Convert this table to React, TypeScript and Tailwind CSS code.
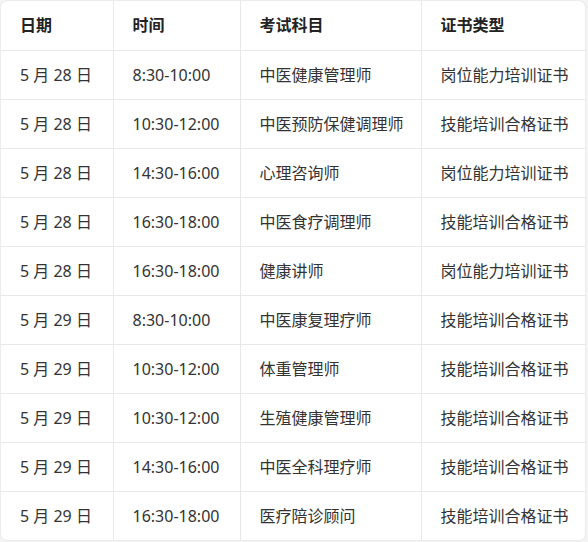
const rows = [
  ["5 月 28 日", "8:30-10:00", "中医健康管理师", "岗位能力培训证书"],
  ["5 月 28 日", "10:30-12:00", "中医预防保健调理师", "技能培训合格证书"],
  ["5 月 28 日", "14:30-16:00", "心理咨询师", "岗位能力培训证书"],
  ["5 月 28 日", "16:30-18:00", "中医食疗调理师", "技能培训合格证书"],
  ["5 月 28 日", "16:30-18:00", "健康讲师", "岗位能力培训证书"],
  ["5 月 29 日", "8:30-10:00", "中医康复理疗师", "技能培训合格证书"],
  ["5 月 29 日", "10:30-12:00", "体重管理师", "技能培训合格证书"],
  ["5 月 29 日", "10:30-12:00", "生殖健康管理师", "技能培训合格证书"],
  ["5 月 29 日", "14:30-16:00", "中医全科理疗师", "技能培训合格证书"],
  ["5 月 29 日", "16:30-18:00", "医疗陪诊顾问", "技能培训合格证书"],
];

const headers = ["日期", "时间", "考试科目", "证书类型"];
const widths = ["w-[112px]", "w-[127px]", "w-[181px]", ""];

export default function App() {
  return (
    <div
      className="w-[588px] h-[542px] bg-[#f4f4f4] pt-px pl-px"
      style={{ fontFamily: '"Noto Sans", "Noto Sans CJK SC", sans-serif' }}
    >
      <div className="w-[584px] h-[539px] bg-white rounded-md shadow-[0_0_2px_rgba(0,0,0,0.12)] overflow-hidden">
        <table className="w-full border-collapse table-fixed text-[16px]">
          <thead>
            <tr className="h-[49px] border-b border-[#e8e8e8]">
              {headers.map((h, i) => (
                <th
                  key={h}
                  className={`${widths[i]} text-left font-bold text-[#222] pl-[19px] ${i < 3 ? "border-r border-[#e8e8e8]" : ""}`}
                >
                  {h}
                </th>
              ))}
            </tr>
          </thead>
          <tbody>
            {rows.map((r, ri) => (
              <tr
                key={ri}
                className={`h-[49px] ${ri < rows.length - 1 ? "border-b border-[#e8e8e8]" : ""}`}
              >
                {r.map((c, ci) => (
                  <td
                    key={ci}
                    className={`pl-[19px] text-[#333] whitespace-nowrap ${ci < 3 ? "border-r border-[#e8e8e8]" : ""}`}
                  >
                    {c}
                  </td>
                ))}
              </tr>
            ))}
          </tbody>
        </table>
      </div>
    </div>
  );
}
